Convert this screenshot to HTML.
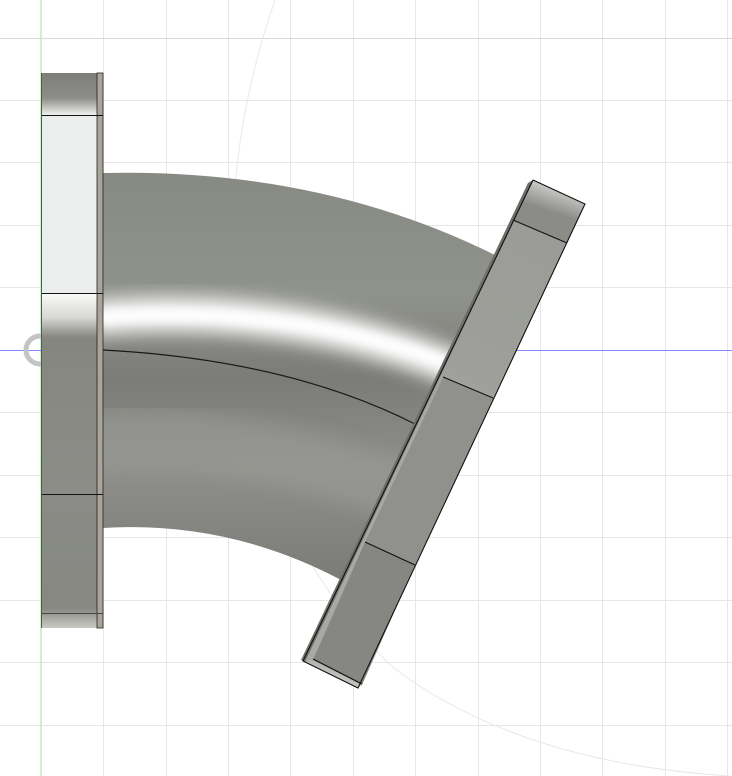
<!DOCTYPE html>
<html><head><meta charset="utf-8"><style>
html,body{margin:0;padding:0;background:#fff;width:732px;height:776px;overflow:hidden}
</style></head><body>
<svg width="732" height="776" viewBox="0 0 732 776" xmlns="http://www.w3.org/2000/svg">
<defs>
<linearGradient id="pipe" x1="0" y1="170" x2="0" y2="585" gradientUnits="userSpaceOnUse">
<stop offset="0" stop-color="#878983"/>
<stop offset="0.3" stop-color="#90928c"/>
<stop offset="0.5" stop-color="#7b7c77"/>
<stop offset="0.72" stop-color="#8e8f8a"/>
<stop offset="1" stop-color="#7a7b76"/>
</linearGradient>
<clipPath id="pc"><path d="M103,173 Q320,168 495,255 L440,380 L345,582 Q230,520 103,528 Z"/></clipPath>
<filter id="blur" x="-20%" y="-50%" width="140%" height="200%"><feGaussianBlur stdDeviation="9"/></filter>
<filter id="blur2" x="-20%" y="-50%" width="140%" height="200%"><feGaussianBlur stdDeviation="4"/></filter>
<linearGradient id="fl1" x1="0" y1="73" x2="0" y2="115" gradientUnits="userSpaceOnUse">
<stop offset="0" stop-color="#7d7e79"/><stop offset="0.6" stop-color="#8d8e89"/><stop offset="1" stop-color="#f0f0ee"/>
</linearGradient>
<linearGradient id="fl3" x1="0" y1="293" x2="0" y2="495" gradientUnits="userSpaceOnUse">
<stop offset="0" stop-color="#fafaf9"/><stop offset="0.12" stop-color="#d8d8d6"/><stop offset="0.22" stop-color="#85867f"/><stop offset="1" stop-color="#8c8d88"/>
</linearGradient>
<linearGradient id="fl4" x1="0" y1="495" x2="0" y2="628" gradientUnits="userSpaceOnUse">
<stop offset="0" stop-color="#8a8b86"/><stop offset="0.85" stop-color="#878882"/><stop offset="1" stop-color="#c9c9c5"/>
</linearGradient>
<linearGradient id="rf" x1="520" y1="230" x2="420" y2="420" gradientUnits="userSpaceOnUse">
<stop offset="0" stop-color="#9b9c97"/><stop offset="0.7" stop-color="#9e9f9a"/><stop offset="1" stop-color="#a8a9a4"/>
</linearGradient>
<linearGradient id="rcap" x1="560" y1="190" x2="545" y2="235" gradientUnits="userSpaceOnUse">
<stop offset="0" stop-color="#c8c8c4"/><stop offset="0.5" stop-color="#8b8c87"/><stop offset="1" stop-color="#8b8c87"/>
</linearGradient>
<linearGradient id="rbot" x1="350" y1="650" x2="335" y2="690" gradientUnits="userSpaceOnUse">
<stop offset="0" stop-color="#868781"/><stop offset="1" stop-color="#d9d9d6"/>
</linearGradient>
</defs>
<g stroke="#e6e6e6" stroke-width="1">
<line x1="103.5" y1="0" x2="103.5" y2="776"/><line x1="166.5" y1="0" x2="166.5" y2="776"/>
<line x1="228.5" y1="0" x2="228.5" y2="776"/><line x1="290.5" y1="0" x2="290.5" y2="776"/>
<line x1="353.5" y1="0" x2="353.5" y2="776"/><line x1="415.5" y1="0" x2="415.5" y2="776"/>
<line x1="478.5" y1="0" x2="478.5" y2="776"/><line x1="540.5" y1="0" x2="540.5" y2="776"/>
<line x1="602.5" y1="0" x2="602.5" y2="776"/><line x1="665.5" y1="0" x2="665.5" y2="776"/>
<line x1="727.5" y1="0" x2="727.5" y2="776"/>
<line x1="0" y1="38.5" x2="732" y2="38.5" stroke="#d8d8d8"/><line x1="0" y1="100.5" x2="732" y2="100.5"/>
<line x1="0" y1="162.5" x2="732" y2="162.5"/><line x1="0" y1="225.5" x2="732" y2="225.5"/>
<line x1="0" y1="287.5" x2="732" y2="287.5"/><line x1="0" y1="412.5" x2="732" y2="412.5"/>
<line x1="0" y1="475.5" x2="732" y2="475.5"/><line x1="0" y1="537.5" x2="732" y2="537.5"/>
<line x1="0" y1="600.5" x2="732" y2="600.5"/><line x1="0" y1="662.5" x2="732" y2="662.5"/>
<line x1="0" y1="725.5" x2="732" y2="725.5"/>
</g>
<line x1="41" y1="0" x2="41" y2="776" stroke="#b8f0b8" stroke-width="1.5"/>
<line x1="0" y1="350.5" x2="732" y2="350.5" stroke="#8888ff" stroke-width="1"/>
<path d="M275,0 C205,200 205,480 390,665 C480,735 600,768 730,776" fill="none" stroke="#e8e8e8" stroke-width="1"/>
<circle cx="40" cy="350" r="14" fill="none" stroke="#c4c4c4" stroke-width="5"/>
<!-- pipe -->
<path d="M103,173 Q320,168 495,255 L440,380 L345,582 Q230,520 103,528 Z" fill="url(#pipe)"/>
<g clip-path="url(#pc)">
<path d="M90,318 Q300,300 470,375" fill="none" stroke="#ffffff" stroke-width="34" filter="url(#blur)" opacity="0.95"/>
<path d="M90,318 Q300,302 470,372" fill="none" stroke="#ffffff" stroke-width="10" filter="url(#blur2)"/>
<path d="M80,440 Q250,430 420,500" fill="none" stroke="#9a9b96" stroke-width="60" filter="url(#blur)" opacity="0.6"/>
</g>
<path d="M103,350 Q290,360 417,425" fill="none" stroke="#1a1a1a" stroke-width="1.2"/>
<!-- left flange -->
<rect x="41" y="73" width="57" height="42" fill="url(#fl1)"/>
<rect x="41" y="115" width="57" height="178" fill="#eceeee"/>
<rect x="41" y="293" width="57" height="202" fill="url(#fl3)"/>
<rect x="41" y="495" width="57" height="133" fill="url(#fl4)"/>
<rect x="97" y="73" width="6" height="555" fill="#a9a59a" stroke="#222" stroke-width="0.8"/>
<g stroke="#111" stroke-width="1">
<line x1="41" y1="115.5" x2="103" y2="115.5"/><line x1="41" y1="293.5" x2="103" y2="293.5"/>
<line x1="41" y1="494.5" x2="103" y2="494.5"/><line x1="41" y1="613.5" x2="103" y2="613.5" stroke="#444"/>
<line x1="41.5" y1="73" x2="41.5" y2="628" stroke="#555"/>
</g>
<!-- right flange -->
<path d="M513,220 L567,243 L358,688 L305,662 Z" fill="url(#rf)"/>
<path d="M443,378 L493,399 L415,565 L365,542 Z" fill="#90918c"/>
<path d="M365,542 L415,565 L362,685 L313,660 Z" fill="#868782"/>
<path d="M533,180 L585,204 L567,243 L513,220 Z" fill="url(#rcap)"/>
<path d="M313,660 L362,685 L358,688 L305,662 Z" fill="url(#rbot)"/>
<path d="M528,183 L533,180 L305,662 L301,660 Z" fill="#6d6e69"/>
<g stroke="#111" stroke-width="1.1" fill="none">
<path d="M533,180 L585,204 L358,688 L303,661 L533,180"/>
<line x1="513" y1="220" x2="567" y2="243"/>
<line x1="443" y1="377" x2="493" y2="398"/>
<line x1="365" y1="542" x2="415" y2="565"/>
<line x1="313" y1="659" x2="362" y2="684"/>
</g>
</svg>
</body></html>
